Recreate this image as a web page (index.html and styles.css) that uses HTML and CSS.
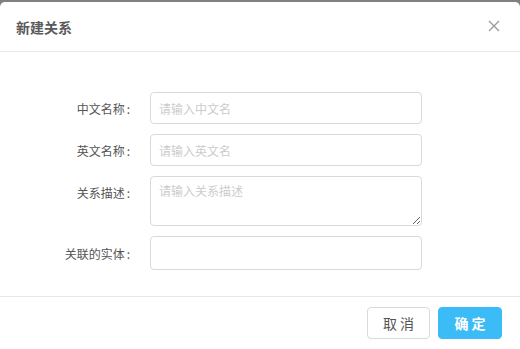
FILE: index.html
```html
<!DOCTYPE html>
<html lang="zh-CN">
<head>
  <meta charset="UTF-8">
  <title>新建关系</title>
  <link rel="stylesheet" href="styles.css">
</head>
<body>
  <div class="modal">
    <div class="modal-header">
      <h3>新建关系</h3>
      <span class="close">
        <svg width="12" height="12" viewBox="0 0 12 12"><path d="M1 1L11 11M11 1L1 11" stroke="#999" stroke-width="1.3"/></svg>
      </span>
    </div>

    <div class="modal-body">
      <div class="form-row">
        <label>中文名称<span class="colon">:</span></label>
        <input type="text" placeholder="请输入中文名">
      </div>
      <div class="form-row">
        <label>英文名称<span class="colon">:</span></label>
        <input type="text" placeholder="请输入英文名">
      </div>
      <div class="form-row textarea-row">
        <label>关系描述<span class="colon">:</span></label>
        <textarea placeholder="请输入关系描述"></textarea>
      </div>
      <div class="form-row">
        <label>关联的实体<span class="colon">:</span></label>
        <div class="select"></div>
      </div>
    </div>

    <div class="modal-footer">
      <button class="btn">取 消</button>
      <button class="btn btn-primary">确 定</button>
    </div>
  </div>
</body>
</html>
```

FILE: styles.css
```css
html, body {
  margin: 0;
  height: 100%;
}
body {
  background: #808080;
  font-family: "Noto Sans CJK SC", "Noto Sans", sans-serif;
  color: #555;
  padding-top: 2px;
  box-sizing: border-box;
  overflow: hidden;
}
.modal {
  background: #fff;
  border-radius: 5px;
  height: 360px;
}
.modal-header {
  height: 49px;
  border-bottom: 1px solid #e8e8e8;
  display: flex;
  align-items: center;
  justify-content: space-between;
  padding: 0 16px;
}
.modal-header h3 {
  margin: 0;
  font-size: 14px;
  font-weight: bold;
  color: #5a5a5a;
}
.close {
  display: flex;
  margin-right: 4px;
  margin-top: -2px;
}
.modal-body {
  padding: 40px 0 26px;
  display: flex;
  flex-direction: column;
  gap: 10px;
}
.form-row {
  display: flex;
  align-items: center;
}
.form-row label {
  width: 130px;
  text-align: right;
  font-size: 12px;
  color: #555;
  margin-right: 20px;
}
.colon {
  margin-left: 2px;
}
.textarea-row {
  align-items: flex-start;
}
.textarea-row label {
  margin-top: 8px;
}
input, textarea, .select {
  width: 272px;
  box-sizing: border-box;
  border: 1px solid #d9d9d9;
  border-radius: 4px;
  font-family: inherit;
  font-size: 12px;
  padding: 0 8px;
  outline: none;
  margin: 0;
}
input {
  height: 32px;
}
textarea {
  height: 50px;
  padding-top: 5px;
  resize: vertical;
  display: block;
}
.select {
  height: 34px;
}
input::placeholder, textarea::placeholder {
  color: #ccc;
}
.modal-footer {
  border-top: 1px solid #e8e8e8;
  display: flex;
  justify-content: flex-end;
  gap: 8px;
  padding: 10px 18px;
}
.btn {
  height: 32px;
  width: 63px;
  border: 1px solid #d9d9d9;
  border-radius: 4px;
  background: #fff;
  font-family: inherit;
  font-size: 14px;
  color: #555;
  padding: 0;
}
.btn-primary {
  width: 64px;
  background: #3bbcf6;
  border-color: #3bbcf6;
  color: #fff;
  font-weight: bold;
}
```
